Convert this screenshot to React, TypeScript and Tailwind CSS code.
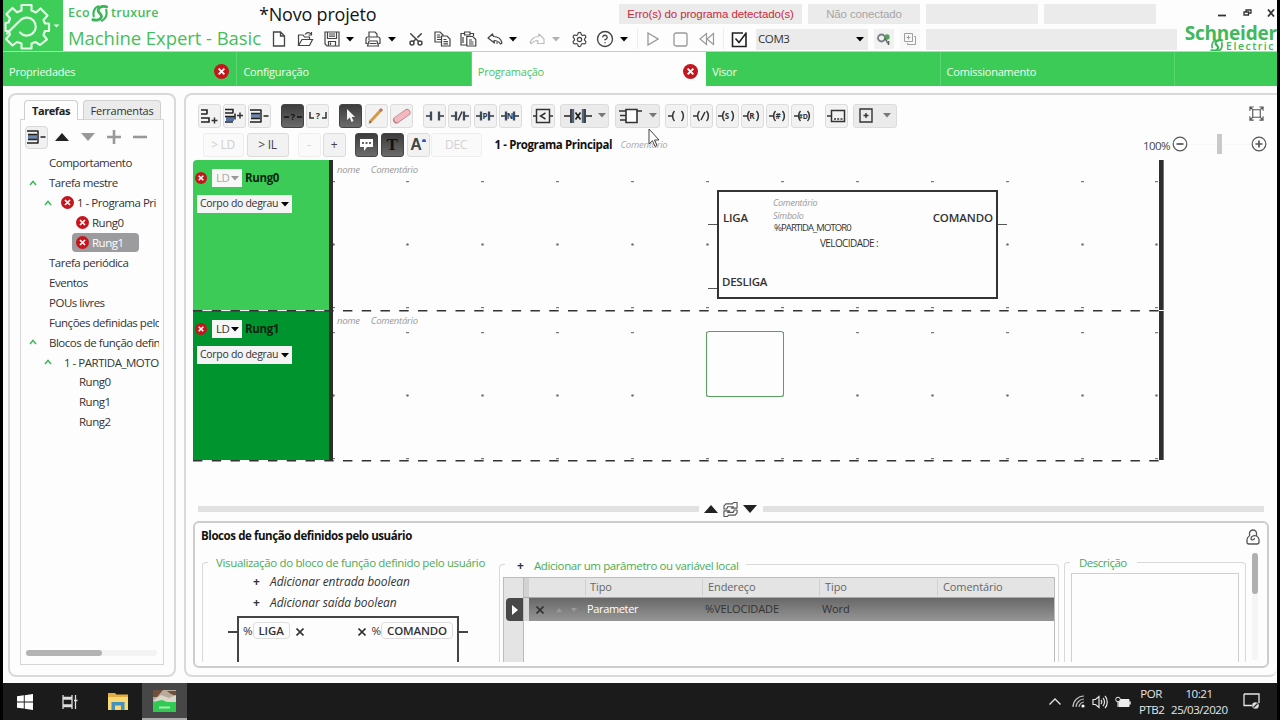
import type { ReactNode } from "react"
import { Scissors, Settings, CircleHelp } from "lucide-react"
import clsx from "clsx"

const Caret = ({ className = "text-black" }: { className?: string }) => (
    <svg className={clsx("shrink-0", className)} width="8" height="5" viewBox="0 0 8 5"><path d="M0 0h8L4 4.6z" fill="currentColor" /></svg>
)

const ErrorDot = ({ size = 13 }: { size?: number }) => (
    <svg className="shrink-0" width={size} height={size} viewBox="0 0 14 14">
        <circle cx="7" cy="7" r="7" fill="#c4161c" />
        <path d="M4.3 4.3l5.4 5.4M9.7 4.3L4.3 9.7" stroke="#fff" strokeWidth="1.8" />
    </svg>
)

const Cell = ({ className, children }: { className?: string, children: ReactNode }) => (
    <div className={clsx("flex h-5 w-[22px] shrink-0 items-center justify-center", className)}>{children}</div>
)

const CaretCell = ({ className, color }: { className?: string, color?: string }) => (
    <div className={clsx("flex h-5 w-[10px] shrink-0 items-center justify-center", className)}><Caret className={color} /></div>
)

function AppIcon() {
    return (
        <div className="flex h-[51px] w-[60px] shrink-0 items-center bg-[#3dcd58]">
            <svg width="60" height="51" viewBox="0 0 60 51" fill="none" stroke="#e4fbe8" strokeWidth="2.2" strokeLinejoin="round" strokeLinecap="round">
                <path d="M18.500 10.500L18.500 5L28.500 5L28.500 10.500L33 12.500L37.500 8.500L44.500 15.500L40.500 20L42 23.500L46 23.500L46 31L42 31L40.500 35L44 39.500L37 45L32.500 42L28.500 43.500L28.500 48.500L18.500 48.500L18.500 43.500L14 42L9.500 45.500L3 39L7 34.500L5.500 31L2.500 31L2.500 23L5.500 22.500L7 18.500L3.500 14L9.500 8L14 12.300Z" />
                <path d="M17 32.500a9 9 0 1 0 1-12.800L14.500 23M4 33.500L14.500 23" />
                <path d="M50.500 24.500h6l-3 3z" fill="#e4fbe8" stroke="none" />
            </svg>
        </div>
    )
}

const LifeMark = ({ className }: { className?: string }) => (
    <svg className={className} viewBox="0 0 20 19" fill="none" stroke="#3cb559" strokeLinecap="round">
        <path d="M17.500 2C11 .5 7.500 3.500 8 6.500s4.500 3.500 3.500 7S6 17.500 2 16.500" strokeWidth="3.200" />
        <path d="M3 12.500c-1-4.500.500-9.500 5-11M17 5.500c1 5-.500 10-5 12" strokeWidth="2.400" />
    </svg>
)

function Header() {
    return (
        <header className="flex h-[51px] shrink-0">
            <AppIcon />
            <div className="w-[196px] shrink-0 pl-[5px] text-[#45be60]">
                <div className="flex h-[27px] items-center text-[12.500px] font-semibold">
                    <span className="tracking-[0.400px]">Eco</span>
                    <LifeMark className="ml-px h-[17px] w-[18px] shrink-0" />
                    <span className="ml-0.5 tracking-[0.300px]">truxure</span>
                </div>
                <div className="whitespace-nowrap text-[18.500px] leading-[22px] tracking-[-0.060px]">Machine Expert - Basic</div>
            </div>
            <div className="flex w-[918px] shrink-0 flex-col">
                <div className="flex h-7 items-start pt-1">
                    <div className="w-[360px] whitespace-nowrap text-[18px] leading-[21px] tracking-[-0.200px] text-[#151515]">*Novo projeto</div>
                    <div className="flex gap-1.5 text-center font-['Liberation_Sans',sans-serif] text-[11.500px] leading-5 tracking-[-0.130px]">
                        <div className="h-5 w-[183px] bg-[#ebebeb] text-[#c92a41]">Erro(s) do programa detectado(s)</div>
                        <div className="h-5 w-[112px] bg-[#ebebeb] text-[#a6a6a6]">Não conectado</div>
                        <div className="h-5 w-[112px] bg-[#ebebeb]" />
                        <div className="h-5 w-[112px] bg-[#ebebeb]" />
                    </div>
                </div>
                <div className="flex h-[22px] items-center pl-[9px] text-[#444]">
                    <Cell><svg width="14" height="16" viewBox="0 0 14 16" fill="none" stroke="currentColor" strokeWidth="1.3"><path d="M1.500 1h7l4 4v10h-11zM8.500 1v4h4" /></svg></Cell>
                    <Cell className="ml-1"><svg width="17" height="16" viewBox="0 0 17 16" fill="none" stroke="currentColor" strokeWidth="1.200"><path d="M1.500 14.500V4h4.500l1.500 2h5v2.500M1.500 14.500L5 8.500h10.500l-3 6zM8 3.500c2-2.500 4.500-2.500 6-.500M14.500 1v3h-3" /></svg></Cell>
                    <Cell className="ml-[5px]"><svg width="16" height="16" viewBox="0 0 16 16" fill="none" stroke="currentColor" strokeWidth="1.200"><path d="M1 1h14v14H3l-2-2zM3.500 1v6.500h9V1M4.500 15v-4.500h7V15M6.500 11.500v2.500M5 3h6M5 5.200h6" /></svg></Cell>
                    <CaretCell className="ml-0.5" />
                    <Cell className="ml-[7px]"><svg width="16" height="16" viewBox="0 0 16 16" fill="none" stroke="currentColor" strokeWidth="1.200"><path d="M4 6V1h6l2 2v3M2.500 12.500H1V8c0-1.300.8-2 2-2h10c1.200 0 2 .7 2 2v4.500h-1.500M4 10h8l1.500 5h-11zM4.500 12.500h7M3 8h2" /></svg></Cell>
                    <CaretCell className="ml-[3px]" />
                    <Cell className="ml-2"><Scissors size={16} strokeWidth={2.200} className="rotate-[-90deg]" /></Cell>
                    <Cell className="ml-1"><svg width="17" height="16" viewBox="0 0 17 16" fill="none" stroke="currentColor" strokeWidth="1.200"><path d="M7.500 11H1V1h5l3 3v1M3 4h3M3 6.200h3.500M3 8.500h4M7.500 5h5.500l3 3v7H7.500zM9.500 8.500h3M9.500 10.700h4.500M9.500 12.800h4.500" /></svg></Cell>
                    <Cell className="ml-1"><svg width="17" height="16" viewBox="0 0 17 16" fill="none" stroke="currentColor" strokeWidth="1.200"><path d="M6.500 14H1V2.500h3.500M10 2.500h3.500V5M4.500 1h5.500v3H4.500zM6.800 5.500h6l3 3V15h-9zM9 9h3M9 11h4.500M9 13h4.500M3 6v6" /></svg></Cell>
                    <Cell className="ml-[5px]"><svg width="16" height="12" viewBox="0 0 16 12" fill="none" stroke="currentColor" strokeWidth="1.200" strokeLinejoin="round"><path d="M1 5L5.500 1l1 2.500c4 0 7.500 2 8.500 6.500l-1.500 1C11.500 8 9.500 7.500 7 7.500L7.500 10zM9 10h2" /></svg></Cell>
                    <CaretCell className="ml-0.5" />
                    <Cell className="ml-2 text-[#bdbdbd]"><svg width="16" height="12" viewBox="0 0 16 12" fill="none" stroke="currentColor" strokeWidth="1.200" strokeLinejoin="round"><path d="M15 6L10 1 9.500 3.500C5.500 3.500 3 5 1 9.500l1.500 1.200C4.500 8 6.500 7.500 9 7.500l-.5 3h6.500V6" /></svg></Cell>
                    <CaretCell className="ml-[3px]" color="text-[#b0b0b0]" />
                    <Cell className="ml-[7px]"><Settings size={17} strokeWidth={1.700} /></Cell>
                    <Cell className="ml-1"><CircleHelp size={18} strokeWidth={1.800} /></Cell>
                    <CaretCell className="ml-[3px]" />
                    <div className="ml-2 h-5 w-px bg-[#ededed]" />
                    <Cell className="ml-1 text-[#999]"><svg width="12" height="14" viewBox="0 0 12 14" fill="none" stroke="currentColor" strokeWidth="1.300"><path d="M1 1l10 6L1 13z" /></svg></Cell>
                    <Cell className="ml-[5px] text-[#999]"><svg width="15" height="15" viewBox="0 0 15 15" fill="none" stroke="currentColor" strokeWidth="1.300"><rect x="1" y="1" width="13" height="13" rx="2" /></svg></Cell>
                    <Cell className="ml-[5px] text-[#999]"><svg width="16" height="14" viewBox="0 0 16 14" fill="none" stroke="currentColor" strokeWidth="1.200"><path d="M7.500 1.500v11L1 7zM14.500 1.500v11L8 7z" /></svg></Cell>
                    <div className="ml-[5px] h-5 w-px bg-[#ededed]" />
                    <Cell className="ml-1 text-[#222]"><svg width="17" height="17" viewBox="0 0 17 17" fill="none" stroke="currentColor" strokeWidth="1.600"><path d="M15 8v7.500H1.500V2H12M4.500 7.500L8 11.500 15.500 1.500M15 3v6" /></svg></Cell>
                    <div className="ml-1.5 flex h-[21px] w-[112px] items-center justify-between bg-[#ebebeb] pl-0.5 pr-1 text-[11.500px] tracking-[-0.400px] text-[#333]">COM3<Caret /></div>
                    <div className="ml-1.5 flex h-5 w-5 items-center justify-center bg-[#f1f1f1]">
                        <svg width="14" height="13" viewBox="0 0 14 13" fill="none"><circle cx="4.500" cy="5" r="3.500" stroke="#777d88" strokeWidth="1.800" /><circle cx="10" cy="4" r="2.700" fill="#57a05f" /><path d="M7.500 5l2.500 3.500M9.500 9.500h3M11.500 8v4" stroke="#5d6663" strokeWidth="1.500" /></svg>
                    </div>
                    <div className="ml-1.5 flex h-5 w-5 items-center justify-center bg-[#f8f8f8]">
                        <svg width="12" height="12" viewBox="0 0 12 12" fill="none" stroke="#a0a0a0"><path d="M.5.500h8v8h-8zM2.500 4.500h4M4.500 2.500v4M10 3.500h1.500v8h-8V10" /></svg>
                    </div>
                    <div className="ml-1.5 h-[21px] w-[251px] shrink-0 bg-[#ebebeb]" />
                </div>
            </div>
            <div className="flex min-w-0 flex-1 flex-col items-end">
                <div className="flex h-[26px] items-center gap-[13px] pb-px pr-0.5 text-[#333]">
                    <svg width="8" height="8" viewBox="0 0 8 8"><path d="M0 6.500h8" stroke="currentColor" strokeWidth="1.800" /></svg>
                    <svg className="ml-1" width="9" height="8" viewBox="0 0 9 8" fill="none" stroke="currentColor" strokeWidth="1.300"><path d="M1 3h4.500v3H1zM3 2.500V1h5v3H6" /></svg>
                    <svg className="ml-0.5" width="8" height="8" viewBox="0 0 8 8"><path d="M1 .5l6 7M7 .5l-6 7" stroke="currentColor" strokeWidth="1.800" /></svg>
                </div>
                <div className="h-[14px] whitespace-nowrap text-[19px] font-bold leading-[15px] tracking-[-0.200px] text-[#3fb95b]">Schneider</div>
                <div className="flex h-[11px] items-center text-[#3fb95b]">
                    <LifeMark className="mr-0.5 h-[13px] w-[14px]" />
                    <span className="mr-0.5 text-[10.500px] font-semibold leading-[10px] tracking-[1.500px]">Electric</span>
                </div>
            </div>
        </header>
    )
}

const tabs = [
    { label: "Propriedades", error: true },
    { label: "Configuração" },
    { label: "Programação", error: true, active: true },
    { label: "Visor" },
    { label: "Comissionamento" },
]

function TabBar() {
    return (
        <nav className="flex h-[35px] shrink-0 border-t border-[#a9dfb4] bg-[#3dcb57] text-[11px] tracking-[-0.220px] text-[#effff1]">
            {tabs.map(tab => (
                <div key={tab.label} className={clsx("flex w-[234.400px] shrink-0 items-center justify-between border-r pl-1.5 pr-[7px]", tab.active ? "border-[#fdfdfd] bg-[#fdfdfd] text-[#48c561]" : "border-[#5bd672]")}>
                    <span className="mt-[7px]">{tab.label}</span>
                    {tab.error && <span className="mt-[5px]"><ErrorDot size={15} /></span>}
                </div>
            ))}
        </nav>
    )
}

const Up = ({ className }: { className?: string }) => <svg className={className} width="8" height="6" viewBox="0 0 8 6" fill="none" stroke="#3cb85a" strokeWidth="1.500"><path d="M1 5l3-3.500L7 5" /></svg>

const tree = [
    { label: "Comportamento", indent: "pl-[28px]" },
    { label: "Tarefa mestre", indent: "pl-[8px]", open: true },
    { label: "1 - Programa Pri", indent: "pl-[23px]", open: true, error: true },
    { label: "Rung0", indent: "pl-[55px]", error: true },
    { label: "Rung1", indent: "pl-[51px]", error: true, selected: true },
    { label: "Tarefa periódica", indent: "pl-[28px]" },
    { label: "Eventos", indent: "pl-[28px]" },
    { label: "POUs livres", indent: "pl-[28px]" },
    { label: "Funções definidas pelo", indent: "pl-[28px]" },
    { label: "Blocos de função defin", indent: "pl-[8px]", open: true },
    { label: "1 - PARTIDA_MOTO", indent: "pl-[23px]", open: true },
    { label: "Rung0", indent: "pl-[58px]" },
    { label: "Rung1", indent: "pl-[58px]" },
    { label: "Rung2", indent: "pl-[58px]" },
]

const CollapseIcon = () => (
    <svg width="19" height="16" viewBox="0 0 19 16" fill="none" stroke="#222" strokeWidth="1.500"><path d="M1 5h9v6H1z" fill="#6d87ad" stroke="none" /><path d="M0 2h11M1 5.500h9M1 10.500h9M0 14h11M11 1.500v13M13.500 8h5" /></svg>
)

function TaskPanel() {
    return (
        <aside className="flex h-[584px] w-[168px] shrink-0 flex-col rounded-lg border-2 border-[#d9d9db] px-[10px] pt-[5px]">
            <div className="flex h-[19px] items-end pl-1 text-[11px] leading-[19px] tracking-[-0.200px]">
                <div className="z-10 -mb-px mr-[5px] flex h-5 w-[54px] items-center justify-center rounded-t border border-b-0 border-[#cfcfcf] bg-[#fdfdfd] font-bold tracking-[-0.400px]">Tarefas</div>
                <div className="flex h-[19px] w-[78px] items-center justify-center rounded-t border border-b-0 border-[#cfcfcf] bg-[#ebebeb] text-[#333]">Ferramentas</div>
            </div>
            <div className="flex h-[546px] flex-col border border-[#d6d6d6]">
                <div className="flex h-[33px] items-center pl-1 pt-px">
                    <div className="flex h-[23px] w-[23px] items-center justify-center rounded border border-[#d8d8d8] bg-[#f0f0f0]"><CollapseIcon /></div>
                    <svg className="ml-[7px]" width="14" height="8" viewBox="0 0 14 8"><path d="M0 8h14L7 0z" fill="#222" /></svg>
                    <svg className="ml-3" width="14" height="8" viewBox="0 0 14 8"><path d="M0 0h14L7 8z" fill="#999" /></svg>
                    <svg className="ml-3" width="14" height="14" viewBox="0 0 14 14"><path d="M0 7h14M7 0v14" stroke="#999" strokeWidth="2.600" /></svg>
                    <svg className="ml-3" width="14" height="14" viewBox="0 0 14 14"><path d="M0 7h14" stroke="#999" strokeWidth="2.600" /></svg>
                </div>
                <div className="flex w-[140px] flex-col overflow-hidden pr-0.5">
                    {tree.map((item, i) => (
                        <div key={i} className={clsx("flex h-[19.920px] items-center overflow-hidden text-[11.500px] leading-[17px] tracking-[-0.480px] text-[#333]", item.indent)}>
                            {item.open && <span className={clsx("shrink-0", item.error ? "w-[17px]" : item.indent === "pl-[23px]" ? "w-[20px]" : "w-5")}><Up /></span>}
                            <span className={clsx("flex items-center gap-[3px] whitespace-nowrap", item.selected && "h-[19px] w-[67px] shrink-0 rounded-sm bg-[#9c9c9f] pl-1 text-white")}>
                                {item.error && <ErrorDot />}
                                {item.label}
                            </span>
                        </div>
                    ))}
                </div>
                <div className="mb-2 mt-auto ml-[5px] h-[6px] w-[131px] rounded-full bg-[#f3f3f3]"><div className="h-[6px] w-[76px] rounded-full bg-[#b3b3b3]" /></div>
            </div>
        </aside>
    )
}

const Tool = ({ className = "w-[23px]", dark, children }: { className?: string, dark?: boolean, children?: ReactNode }) => (
    <div className={clsx("flex h-6 shrink-0 items-center justify-center rounded-[3px] border", className, dark ? "border-[#444] bg-linear-to-b from-[#3c3c3c] to-[#6b6b6b]" : "border-[#dcdcdc] bg-[#f2f2f2]")}>{children}</div>
)

const Glyph = ({ d, label, size = 8, children }: { d: string, label?: string, size?: number, children?: ReactNode }) => (
    <svg width="20" height="18" viewBox="0 0 20 18" className="shrink-0" fill="none" stroke="#333" strokeWidth="1.500">
        <path d={d} />
        {label && <text x="10" y="12" textAnchor="middle" fontSize={size} fontWeight="700" fill="#333" stroke="none">{label}</text>}
        {children}
    </svg>
)

const contactLeads = "M1 9h4.500M14.500 9h4.500"
const contactBars = <path d="M6 4.500v9M14 4.500v9" stroke="#3d4a5c" strokeWidth="2.300" />
const coil = "M1 9h4M7.500 4C5 6.500 5 11.500 7.500 14M14.500 4c2.500 2.500 2.500 7.500 0 10"

function Toolbar() {
    return (
        <div className="flex h-[57px] shrink-0 justify-between pl-[4.500px]">
            <div className="flex flex-col gap-[5.500px] pt-[0.500px]">
                <div className="flex">
                    <div className="flex w-[83.500px] gap-[2.300px]">
                        <Tool><Glyph d=""><path d="M2 3h6M2 7h6M2 11h8M2 15h8M8 2.300v5M10 10.300v5.500" stroke="#222" strokeWidth="1.600" /><path d="M12.500 13.500h6M15.500 10.500v6" /></Glyph></Tool>
                        <Tool><Glyph d=""><path d="M2 10h8v4H2z" fill="#5674a3" stroke="none" /><path d="M1 2.500h8M1 6h8M1 9.500h10M1 15h8M9 1.800v4.500M11 6.500v6" stroke="#222" strokeWidth="1.500" /><path d="M13 8.500h6M16 5.500v6" /></Glyph></Tool>
                        <Tool><CollapseIcon /></Tool>
                    </div>
                    <div className="flex w-[58px] gap-[2.300px]">
                        <Tool dark><svg width="20" height="18" viewBox="0 0 20 18"><path d="M1 10h5M14 10h5" stroke="#111" strokeWidth="1.500" /><text x="10" y="13" textAnchor="middle" fontSize="9" fontWeight="700" fill="#111">?</text></svg></Tool>
                        <Tool><Glyph d="M2 5v6h4M18 5v6h-4" label="?" size={9} /></Tool>
                    </div>
                    <div className="flex w-[84px] gap-[2.500px]">
                        <Tool dark><svg width="12" height="15" viewBox="0 0 12 15"><path d="M2 1v11l2.800-2.500L6.500 14l2-1-1.800-4H10z" fill="#f5f5f5" /></svg></Tool>
                        <Tool><svg width="18" height="18" viewBox="0 0 18 18"><path d="M2.500 15.500L14 3" stroke="#d99a45" strokeWidth="3" /><path d="M13 4l2-2" stroke="#b07763" strokeWidth="3" /><path d="M1.500 17l2-3 1 1z" fill="#444" /></svg></Tool>
                        <Tool><svg width="20" height="18" viewBox="0 0 20 18"><path d="M4.500 13L15 5.500" stroke="#b98288" strokeWidth="7" strokeLinecap="round" /><path d="M5 12.500L15 5.500" stroke="#f3b9bf" strokeWidth="5.400" strokeLinecap="round" /></svg></Tool>
                    </div>
                    <div className="flex w-[108px] gap-[2.300px]">
                        <Tool><Glyph d={contactLeads}>{contactBars}</Glyph></Tool>
                        <Tool><Glyph d={contactLeads + "M8 13.500l4-9"}>{contactBars}</Glyph></Tool>
                        <Tool><Glyph d={contactLeads} label="P" size={8}>{contactBars}</Glyph></Tool>
                        <Tool><Glyph d={contactLeads} label="N" size={8}>{contactBars}</Glyph></Tool>
                    </div>
                    <div className="w-[29px]"><Tool className="w-6"><Glyph d="M3.500 2.500h13v13h-13zM0 9h3.500M16.500 9H20M12.500 6L7.500 9l5 3" /></Tool></div>
                    <div className="w-[55px]">
                        <Tool className="w-[49px] gap-1.5 bg-[#ebebeb]!">
                            <svg width="28" height="18" viewBox="0 0 28 18" fill="none" stroke="#222" strokeWidth="1.700"><path d="M0 9h6M22 9h6M7 2v14M21 2v14M11.500 5.500l5 7M16.500 5.500l-5 7" /><path d="M9 2v14M19 2v14" stroke="#53657c" strokeWidth="2.400" /></svg>
                            <Caret className="text-[#777]" />
                        </Tool>
                    </div>
                    <div className="w-[50px]">
                        <Tool className="w-[45px] gap-1.5 bg-[#ebebeb]!">
                            <svg width="24" height="16" viewBox="0 0 24 16" fill="none" stroke="#333" strokeWidth="1.600"><path d="M7 1.500h11v13H7z" fill="#fff" /><path d="M0 3h7M1 7.500h6M1 12h6M18 3h5" /></svg>
                            <Caret className="text-[#777]" />
                        </Tool>
                    </div>
                    <div className="flex w-[160px] gap-[2.300px]">
                        <Tool><Glyph d={coil} /></Tool>
                        <Tool><Glyph d={coil + "M9 13l4-8"} /></Tool>
                        <Tool><Glyph d={coil} label="S" /></Tool>
                        <Tool><Glyph d={coil} label="R" /></Tool>
                        <Tool><Glyph d={coil} label="#" /></Tool>
                        <Tool><Glyph d={coil} label="#D" size={7} /></Tool>
                    </div>
                    <div className="w-[28px]"><Tool><Glyph d="M4.500 3.500h13v11h-13zM0 9h4.500M7 12h2M10.200 12h2M13.500 12h2" /></Tool></div>
                    <Tool className="w-[44px] gap-2.5 bg-[#ebebeb]!"><svg width="14" height="15" viewBox="0 0 14 15" fill="none" stroke="#333" strokeWidth="1.400"><path d="M1 1h12v13H1zM4.500 7.500h5M7 5v5" /></svg><Caret className="text-[#777]" /></Tool>
                </div>
                <div className="flex items-center text-[12px] tracking-[-0.300px] text-[#444]">
                    <Tool className="ml-[5px] w-[41px] border-[#eee]! bg-[#fafafa]! text-[#cfcfcf]">&gt; LD</Tool>
                    <Tool className="ml-[3px] w-[42px]">&gt; IL</Tool>
                    <Tool className="ml-[9px] w-[23px] border-[#eee]! bg-[#fafafa]! text-[#cfcfcf]">-</Tool>
                    <Tool className="ml-0.5 w-[23px]">+</Tool>
                    <Tool dark className="ml-[9px] w-[23px]"><svg width="15" height="14" viewBox="0 0 15 14"><path d="M1 1h13v8H8l-3 4V9H1z" fill="#fff" /><path d="M3 5h2M6.500 5h2M10 5h2" stroke="#333" strokeWidth="1.500" /></svg></Tool>
                    <Tool dark className="ml-[3px] w-[23px] font-['Liberation_Serif',serif] text-[17px] font-bold text-[#111]">T</Tool>
                    <Tool className="ml-[3px] w-[23px] font-['Liberation_Sans',sans-serif] text-[16px] font-bold"><span>A</span><span className="mb-2.5 h-[3px] w-1 rounded-t-full bg-[#4454c4]" /></Tool>
                    <Tool className="ml-px w-[51px] border-[#eee]! bg-[#fafafa]! text-[#d2d2d2]">DEC</Tool>
                    <span className="ml-[13px] w-[126px] whitespace-nowrap text-[11.500px] font-bold tracking-[-0.400px] text-[#111]">1 - Programa Principal</span>
                    <span className="text-[9.500px] italic tracking-[-0.250px] text-[#aaa]">Comentário</span>
                </div>
            </div>
            <div className="flex flex-col items-end pr-[10px]">
                <svg className="mr-[3px] mt-[3px]" width="15" height="15" viewBox="0 0 16 16" fill="none" stroke="#555" strokeWidth="1.200"><path d="M1 5V1h4M11 1h4v4M15 11v4h-4M5 15H1v-4M1 1l3 3M15 1l-3 3M15 15l-3-3M1 15l3-3M4 4h8v8H4z" /></svg>
                <div className="mt-[12.500px] flex items-center text-[#444]">
                    <span className="mr-0.5 mt-[3px] text-[11.500px] tracking-[-0.550px]">100%</span>
                    <svg width="16" height="16" viewBox="0 0 16 16" fill="none" stroke="#555" strokeWidth="1.200"><circle cx="8" cy="8" r="6.800" /><path d="M4.500 8h7" strokeWidth="1.700" /></svg>
                    <div className="flex h-5 w-[63px] items-center justify-center bg-linear-to-b from-transparent from-48% via-[#dcdcdc] via-50% to-transparent to-53%"><div className="h-5 w-[5px] bg-[#c9c9c9]" /></div>
                    <svg width="16" height="16" viewBox="0 0 16 16" fill="none" stroke="#555" strokeWidth="1.200"><circle cx="8" cy="8" r="6.800" /><path d="M4.500 8h7M8 4.500v7" strokeWidth="1.700" /></svg>
                </div>
            </div>
        </div>
    )
}

const gridX = [0, 74, 149, 224, 299, 374, 449, 524, 599, 674, 749, 823]

// grid points, measured from the left rail
const RungGrid = () => (
    <svg className="absolute left-0 top-0" width="833" height="149" viewBox="0 0 833 149">
        {gridX.map(x => (
            <g key={x} fill="#777">
                <rect x={x - 1} y="21" width="3" height="1.200" />
                <circle cx={x + 0.500} cy="84.500" r="1.300" />
                <rect x={x - 1} y="147" width="3" height="1.200" />
            </g>
        ))}
    </svg>
)

const Dashes = () => (
    <svg className="relative -mb-px shrink-0" width="971" height="2" viewBox="0 0 971 2"><path d="M0 .7H966" stroke="#333" strokeWidth="1.400" strokeDasharray="9.400 9.350" /></svg>
)

function Rung({ name, active, children }: { name: string, active?: boolean, children: ReactNode }) {
    return (
        <div className={clsx("flex w-[971px] shrink-0", active ? "h-[149px]" : "h-[150px]")}>
            <div className={clsx("w-[136px] pl-0.5 pt-[9px]", active ? "bg-[#00942e]" : "rounded-tl-sm bg-[#3dcb57]")}>
                <div className="flex h-[18px] items-center text-[11.500px]">
                    <ErrorDot size={12} />
                    <div className={clsx("ml-[5px] flex h-[18px] w-[30px] items-center justify-between bg-[#f7f7f7] pl-1 pr-[3px] tracking-[-0.600px]", active ? "text-[#333]" : "text-[#aaa]")}>LD<Caret className={active ? "text-black" : "text-[#999]"} /></div>
                    <span className="ml-[3px] font-bold tracking-[-0.350px] text-[#0a260f]">{name}</span>
                </div>
                <div className="ml-0.5 mt-2 flex h-[18px] w-[95px] items-center justify-between whitespace-nowrap bg-[#f4f4f4] pl-[3px] pr-[3px] text-[10.500px] tracking-[-0.300px] text-[#333]">Corpo do degrau<Caret /></div>
            </div>
            <div className="w-1 bg-[#2d2f2d]" />
            <div className="relative flex-1">
                <RungGrid />
                <div className="relative flex gap-[11px] pl-1 pt-[3px] text-[9.500px] italic leading-[13px] tracking-[-0.250px] text-[#999]"><span>nome</span><span>Comentário</span></div>
                {children}
            </div>
            <div className="w-[5px] border-r border-[#3e9950] bg-[#2b302d]" />
        </div>
    )
}

function FunctionBlock() {
    return (
        <div className="absolute left-[375px] top-[30px] flex items-start text-[#333]">
            <svg width="9" height="110" viewBox="0 0 9 110"><path d="M0 34.500h9M0 98.500h9" stroke="#555" /></svg>
            <div className="relative h-[108.500px] w-[281px] border-2 border-[#333] bg-[#fdfdfd]">
                <span className="absolute left-1 top-[17px] text-[11.500px] font-semibold tracking-[-0.200px]">LIGA</span>
                <span className="absolute left-[3px] top-[81px] text-[11.500px] font-semibold tracking-[-0.250px]">DESLIGA</span>
                <span className="absolute right-[3px] top-[17px] text-[11.500px] font-semibold tracking-[-0.100px]">COMANDO</span>
                <span className="absolute left-[54px] top-1 text-[9px] italic tracking-[-0.250px] text-[#999]">Comentário</span>
                <span className="absolute left-[54px] top-[17px] text-[9px] italic tracking-[-0.250px] text-[#999]">Símbolo</span>
                <span className="absolute left-[55px] top-[29px] text-[9.500px] tracking-[-0.900px]">%PARTIDA_MOTOR0</span>
                <span className="absolute left-[101px] top-[44px] whitespace-nowrap text-[10px] tracking-[-0.600px]">VELOCIDADE :</span>
            </div>
            <svg width="9" height="110" viewBox="0 0 9 110"><path d="M0 34.500h9" stroke="#555" /></svg>
        </div>
    )
}

function Splitter() {
    return (
        <div className="mt-[40px] flex h-4 shrink-0 items-center pl-[5px] pr-[13px]">
            <div className="h-1.5 flex-1 bg-[#e1e1e1]" />
            <div className="flex w-[64px] items-center justify-center gap-[5px] pr-px text-[#222]">
                <svg width="14" height="8" viewBox="0 0 14 8"><path d="M0 8h14L7 0z" fill="currentColor" /></svg>
                <svg width="15" height="15" viewBox="0 0 16 16" fill="none" stroke="#555" strokeWidth="1.200" strokeLinejoin="round"><path d="M1 7.500V4.500L3 2h7l1.500-1.500 3.500 0v6h-6L11 5H5L4 7.500zM15 8.500v3L13 14H6l-1.500 1.500L1 15.500v-6h6L5 11h6l1-2.500z" /></svg>
                <svg width="14" height="8" viewBox="0 0 14 8"><path d="M0 0h14L7 8z" fill="currentColor" /></svg>
            </div>
            <div className="h-1.5 flex-1 bg-[#e1e1e1]" />
        </div>
    )
}

const Pin = ({ children }: { children: ReactNode }) => <span className="rounded-sm border border-[#ddd] px-[5px] text-[11.500px] font-semibold leading-[15px] tracking-[-0.150px]">{children}</span>

const Cross = ({ className }: { className?: string }) => <svg className={className} width="8" height="8" viewBox="0 0 8 8"><path d="M.5.500l7 7M7.500.500l-7 7" stroke="#333" strokeWidth="1.600" /></svg>

function BlockPreview() {
    return (
        <div className="h-[120px] w-[292px] shrink-0 text-[#333]">
            <div className="flex h-[12px] items-center">
                <div className="mt-2 h-2 w-1.5 rounded-tl border-l border-t border-[#d9d9d9]" />
                <span className="ml-2 mt-0.5 whitespace-nowrap text-[11.500px] tracking-[-0.350px] text-[#4bac55]">Visualização do bloco de função definido pelo usuário</span>
            </div>
            <div className="h-[108px] border-l border-[#d9d9d9]">
                <div className="flex h-[21px] items-center pl-[50px] pt-1.5 text-[12px] italic tracking-[-0.080px]"><b className="w-[17px] not-italic">+</b>Adicionar entrada boolean</div>
                <div className="flex h-[21px] items-center pl-[50px] pt-1.5 text-[12px] italic tracking-[-0.080px]"><b className="w-[17px] not-italic">+</b>Adicionar saída boolean</div>
                <div className="mt-1.5 flex pl-[25px]">
                    <div className="mt-[15px] h-0.5 w-[9px] bg-[#444]" />
                    <div className="flex h-[60px] w-[222px] items-start border-2 border-[#444] px-1 pt-1 text-[11.500px] leading-[17px]">
                        %<Pin>LIGA</Pin><Cross className="ml-1.5 mt-[6px]" />
                        <Cross className="ml-auto mr-1.5 mt-[6px]" />%<Pin>COMANDO</Pin>
                    </div>
                    <div className="mt-[15px] h-0.5 w-[9px] bg-[#444]" />
                </div>
            </div>
        </div>
    )
}

function ParameterTable() {
    return (
        <div className="ml-[5px] flex h-[120px] w-[560px] shrink-0 flex-col">
            <div className="flex h-3 items-center text-[#4bac55]">
                <div className="mt-4 h-3 w-[6px] rounded-tl border-l border-t border-[#d9d9d9]" />
                <span className="ml-[12px] mt-2 w-[17px] text-[12px] font-bold text-[#333]">+</span>
                <span className="mt-2 whitespace-nowrap text-[11.500px] tracking-[-0.400px]">Adicionar um parâmetro ou variável local</span>
                <div className="ml-2 mt-4 h-3 flex-1 rounded-tr border-r border-t border-[#d9d9d9]" />
            </div>
            <div className="h-[108px] border-x border-[#d9d9d9] px-[3px] pt-[9px]">
                <div className="flex h-[99px] border border-[#bcbcbc] text-[11px] tracking-[-0.100px]">
                    <div className="w-[20px] border-r border-[#bbb] bg-[#e4e4e4] pl-0.5 pt-5">
                        <div className="flex h-[23px] items-center justify-center rounded-l bg-[#484848]"><svg width="6" height="10" viewBox="0 0 6 10"><path d="M0 0v10l6-5z" fill="#fff" /></svg></div>
                    </div>
                    <div className="flex flex-1 flex-col">
                        <div className="flex h-5 shrink-0 items-center border-b border-[#aaa] bg-[#e4e4e4] text-[#666]">
                            <div className="h-full w-[5px] bg-[#d2d2d2]" /><div className="w-[56px]" />
                            <div className="w-[117px] border-l border-[#d0d0d0] pl-1">Tipo</div>
                            <div className="w-[117px] border-l border-[#d0d0d0] pl-[5px]">Endereço</div>
                            <div className="w-[118px] border-l border-[#d0d0d0] pl-[5px]">Tipo</div>
                            <div className="border-l border-[#d0d0d0] pl-[5px]">Comentário</div>
                        </div>
                        <div className="flex h-[23px] shrink-0 items-center text-[#333]">
                            <div className="h-full w-[5px] bg-[#d8d8d8]" />
                            <div className="flex h-full flex-1 items-center bg-linear-to-b from-[#686868] to-[#969696]">
                                <div className="flex w-[58px] items-center pl-[7px]">
                                    <Cross />
                                    <svg className="ml-3" width="6" height="4" viewBox="0 0 6 4"><path d="M0 4h6L3 0z" fill="#999" /></svg>
                                    <svg className="ml-[9px]" width="6" height="4" viewBox="0 0 6 4"><path d="M0 0h6L3 4z" fill="#999" /></svg>
                                </div>
                                <div className="w-[118px] tracking-[-0.350px] text-white">Parameter</div>
                                <div className="w-[117px]">%VELOCIDADE</div>
                                <div>Word</div>
                            </div>
                        </div>
                    </div>
                </div>
            </div>
        </div>
    )
}

function DetailPanel() {
    return (
        <section className="mt-1 flex h-[147px] w-[1076px] shrink-0 flex-col overflow-hidden rounded-md border-2 border-[#cdcdcd] pl-[7px]">
            <div className="flex h-[30px] items-start justify-between pr-[7px] pt-1">
                <span className="-ml-px text-[11.500px] font-bold leading-[17px] tracking-[-0.420px] text-[#111]">Blocos de função definidos pelo usuário</span>
                <svg className="mt-0.5" width="14" height="16" viewBox="0 0 14 16" fill="none" stroke="#555" strokeWidth="1.300"><path d="M3.500 7V4.500a3.500 3.500 0 0 1 7 0V7M3.500 7a5.500 4.500 0 0 0-2.500 3.500V13a2 2 0 0 0 2 2h8a2 2 0 0 0 2-2v-2.500A5.500 4.500 0 0 0 10.500 7C9 6.500 5 6.500 5 9.500c0 2 3.500 2 3.500-.5" /></svg>
            </div>
            <div className="flex h-[109px] overflow-hidden">
                <div className="flex pt-[3px]">
                    <BlockPreview />
                    <ParameterTable />
                    <div className="ml-[5px] h-[120px] w-[182px] shrink-0">
                        <div className="flex h-3 items-center">
                            <div className="mt-3 h-3 w-[6px] rounded-tl border-l border-t border-[#d9d9d9]" />
                            <span className="ml-[9px] mt-0.5 text-[11.500px] tracking-[-0.500px] text-[#4bac55]">Descrição</span>
                            <div className="ml-2.5 mt-3 h-3 flex-1 rounded-tr border-r border-t border-[#d9d9d9]" />
                        </div>
                        <div className="h-[108px] border-x border-[#d9d9d9] px-1.5 pt-[5px]"><div className="h-[110px] border border-[#cfcfcf]" /></div>
                    </div>
                </div>
                <div className="ml-[6px] h-[107px] w-[6px] rounded-full bg-[#f5f5f5]"><div className="h-[41px] rounded-full bg-[#b0b0b0]" /></div>
            </div>
        </section>
    )
}

function Editor() {
    return (
        <main className="ml-2 flex h-[584px] min-w-0 flex-1 flex-col rounded-l-lg rounded-br-lg border-2 border-r-0 border-[#d9d9db] pl-[7px] pt-[8px]">
            <div className="relative">
                <Toolbar />
                <svg className="absolute left-[455px] top-[25px]" width="12" height="20" viewBox="0 0 12 20"><path d="M1 1v15l3.500-3.300L7 18.500l2-1-2.500-5.500H11z" fill="#fdfdfd" stroke="#444" /></svg>
            </div>
            <div className="flex shrink-0 flex-col">
                <Rung name="Rung0"><FunctionBlock /></Rung>
                <Dashes />
                <Rung name="Rung1" active><div className="absolute left-[373px] top-[20px] h-[66px] w-[78px] rounded-[3px] border border-[#56a05b] bg-[#fdfdfd]" /></Rung>
                <Dashes />
            </div>
            <Splitter />
            <DetailPanel />
        </main>
    )
}

function Taskbar() {
    return (
        <footer className="flex h-[37px] shrink-0 bg-[#1b1b1b] text-[#e6e6e6]">
            <div className="flex w-[44px] items-center justify-center"><svg width="16" height="16" viewBox="0 0 16 16" fill="#fff"><path d="M0 2.300L6.800 1.300v6.200H0zM7.700 1.200L16 0v7.500H7.700zM0 8.400h6.800v6.200L0 13.700zM7.700 8.400H16V16l-8.300-1.200z" /></svg></div>
            <div className="flex w-[46px] items-center justify-center"><svg width="16" height="16" viewBox="0 0 16 16" fill="none" stroke="#ddd" strokeWidth="1.300"><path d="M1 1v2.500h9V1M1 5h9v6H1zM1 15v-2.500h9V15M13.500 1v14M12 6.500h3.500" /></svg></div>
            <div className="flex w-[49px] items-center justify-center"><svg width="20" height="17" viewBox="0 0 20 17"><path d="M0 0h7l1.500 1.500H20V17H0z" fill="#e4ad3d" /><path d="M0 4h20v13H0z" fill="#f7d873" /><path d="M3.500 17V9h13v8H13v-4.500H7V17z" fill="#4591bd" /></svg></div>
            <div className="flex w-[45px] flex-col items-center justify-between border-b-2 border-[#aaa] bg-[#474747] pt-[7px]">
                <svg width="23" height="22" viewBox="0 0 23 22"><path d="M0 0h23v13H0z" fill="#b6aa9a" /><path d="M0 0h10L4 7H0zM14 1h9v5l-5-2z" fill="#71503b" /><path d="M1 10l7-5 8 3 7-3v8H1z" fill="#d9d6cc" /><path d="M0 12l9-2 5 2h9v10H0z" fill="#30c951" /><path d="M6 17.500h11" stroke="#a5edb1" strokeWidth="2" /></svg>
            </div>
            <div className="ml-auto flex items-center text-center text-[11.500px] leading-4 tracking-[-0.500px]">
                <svg width="12" height="7" viewBox="0 0 12 7" fill="none" stroke="currentColor" strokeWidth="1.300"><path d="M.5 6.500L6 1l5.500 5.500" /></svg>
                <svg className="ml-[11px]" width="13" height="13" viewBox="0 0 13 13" fill="none" stroke="#bbb" strokeWidth="1.200"><path d="M1 12C1 6 6 1 12 1M4 12c0-4 4-8 8-8M7 12c0-2.500 2.500-5 5-5" /><circle cx="11" cy="11" r="1.600" fill="#fff" stroke="none" /></svg>
                <svg className="ml-[7px]" width="16" height="14" viewBox="0 0 16 14" fill="none" stroke="currentColor" strokeWidth="1.200"><path d="M1 4.500h2.500L7 1.500v11L3.500 9.500H1zM9 5c1 1 1 3 0 4M11 3c2 2 2 6 0 8M13 1c3 3 3 9 0 12" /></svg>
                <svg className="ml-[7px]" width="16" height="12" viewBox="0 0 16 12"><path d="M4 3.500h10v7H4z" fill="#eee" stroke="#eee" /><path d="M15 5.500v3" stroke="#eee" strokeWidth="1.500" /><circle cx="3" cy="3.500" r="2.300" fill="#1b1b1b" stroke="#eee" /><path d="M3 5.500V11" stroke="#eee" /></svg>
                <div className="ml-2 w-6">POR<br />PTB2</div>
                <div className="ml-2 w-[56px] tracking-[-0.450px]">10:21<br />25/03/2020</div>
                <svg className="ml-4 mr-[17px]" width="17" height="17" viewBox="0 0 17 17" fill="none" stroke="currentColor" strokeWidth="1.300"><path d="M1 1h15v9M9 12.500H1V1" /><circle cx="12.500" cy="12.500" r="3.300" fill="#ddd" stroke="none" /><path d="M10.500 14.500l4-4" stroke="#333" /></svg>
            </div>
        </footer>
    )
}

export default function App() {
    return (
        <div className="flex h-[720px] w-[1280px] flex-col overflow-hidden border-x-[3px] border-black bg-[#fdfdfd] font-['Open_Sans','Noto_Sans',sans-serif] text-[12px] text-[#222]">
            <Header />
            <TabBar />
            <div className="flex h-[597px] shrink-0 pl-[5px] pt-[7px]">
                <TaskPanel />
                <Editor />
            </div>
            <Taskbar />
        </div>
    )
}
